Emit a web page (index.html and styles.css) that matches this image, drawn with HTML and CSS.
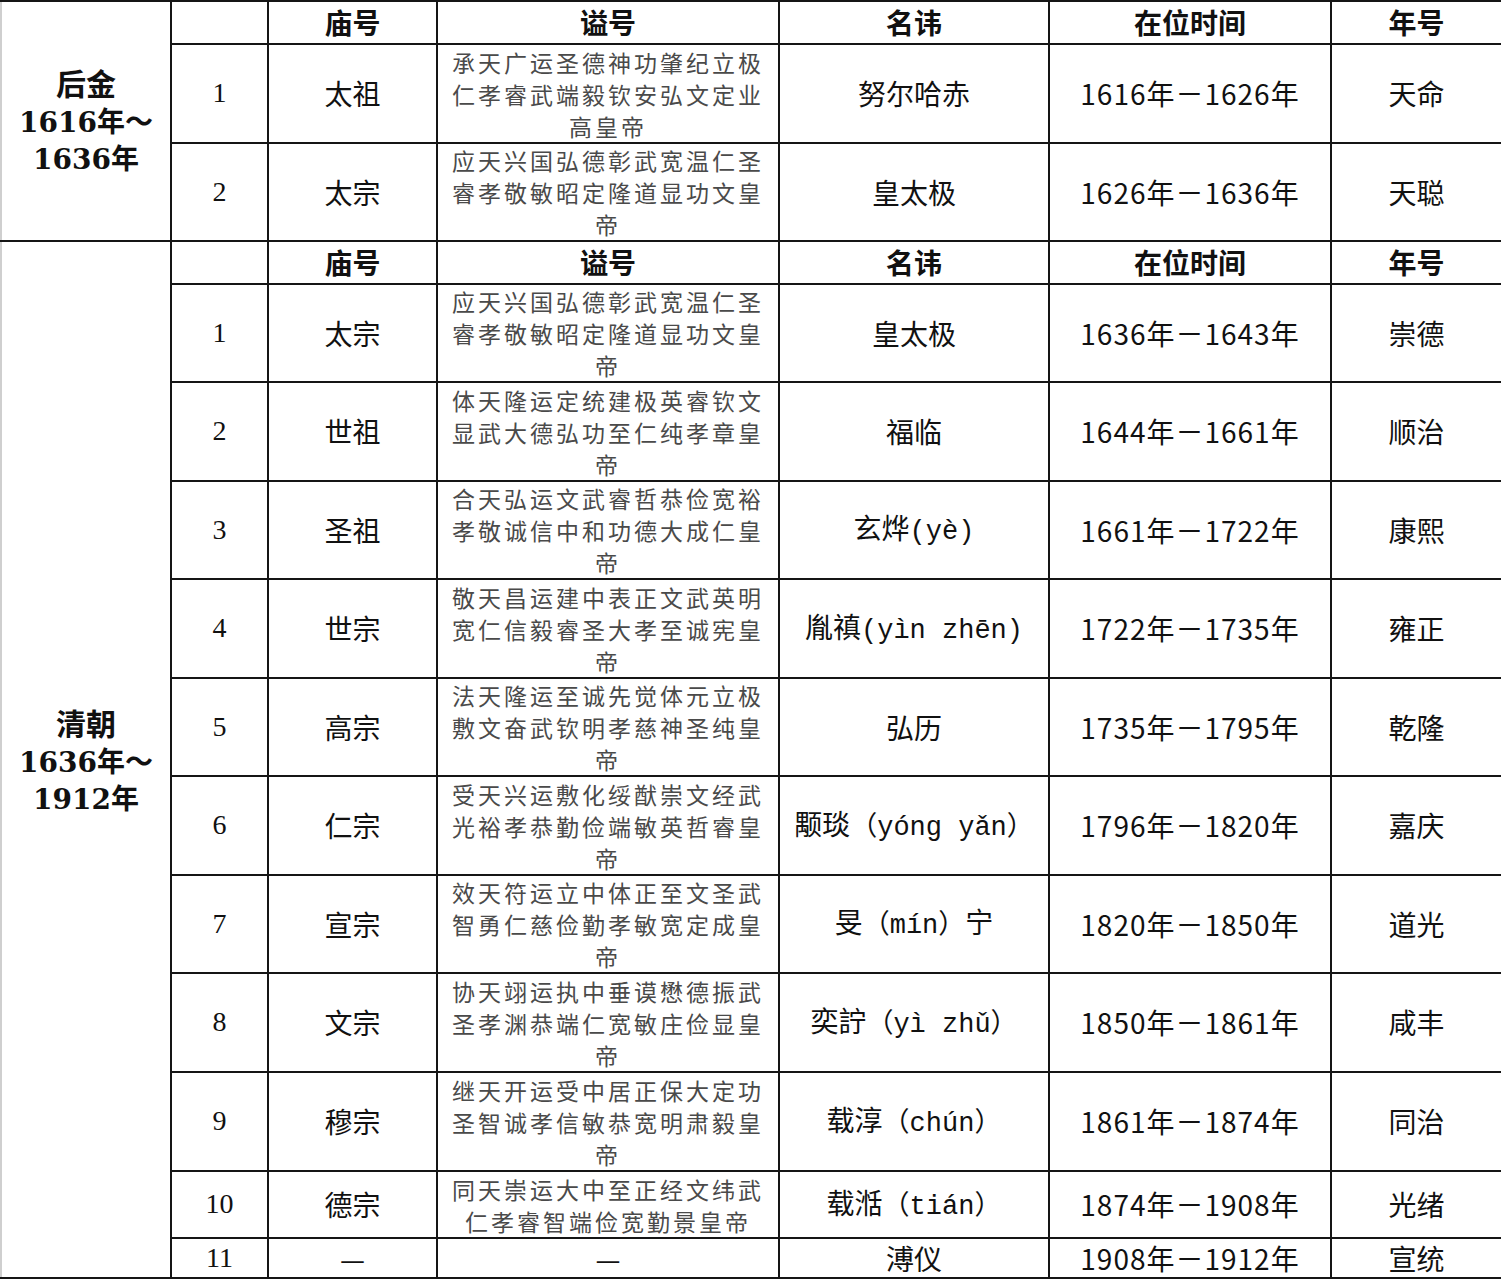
FILE: index.html
```html
<!DOCTYPE html>
<html lang="zh-CN">
<head>
<meta charset="utf-8">
<title>清朝皇帝列表</title>
<link rel="stylesheet" href="styles.css">
</head>
<body>
<table class="emperors">
  <colgroup>
    <col class="c-era"><col class="c-no"><col class="c-temple"><col class="c-post"><col class="c-name"><col class="c-reign"><col class="c-eraname">
  </colgroup>
  <tbody>
    <tr class="h-head">
      <td class="era" rowspan="3"><span class="era-name">后金</span><br>1616年～<br>1636年</td>
      <th class="no"></th><th>庙号</th><th>谥号</th><th>名讳</th><th>在位时间</th><th class="last">年号</th>
    </tr>
    <tr class="h-99">
      <td class="no">1</td><td>太祖</td><td class="post">承天广运圣德神功肇纪立极<br>仁孝睿武端毅钦安弘文定业<br>高皇帝</td><td>努尔哈赤</td><td class="reign">1616年－1626年</td><td class="last">天命</td>
    </tr>
    <tr class="h-98 sect-end">
      <td class="no">2</td><td>太宗</td><td class="post">应天兴国弘德彰武宽温仁圣<br>睿孝敬敏昭定隆道显功文皇<br>帝</td><td>皇太极</td><td class="reign">1626年－1636年</td><td class="last">天聪</td>
    </tr>

    <tr class="h-head">
      <td class="era era-qing" rowspan="12"><span class="era-name">清朝</span><br>1636年～<br>1912年</td>
      <th class="no"></th><th>庙号</th><th>谥号</th><th>名讳</th><th>在位时间</th><th class="last">年号</th>
    </tr>
    <tr class="h-98">
      <td class="no">1</td><td>太宗</td><td class="post">应天兴国弘德彰武宽温仁圣<br>睿孝敬敏昭定隆道显功文皇<br>帝</td><td>皇太极</td><td class="reign">1636年－1643年</td><td class="last">崇德</td>
    </tr>
    <tr class="h-99">
      <td class="no">2</td><td>世祖</td><td class="post">体天隆运定统建极英睿钦文<br>显武大德弘功至仁纯孝章皇<br>帝</td><td>福临</td><td class="reign">1644年－1661年</td><td class="last">顺治</td>
    </tr>
    <tr class="h-98">
      <td class="no">3</td><td>圣祖</td><td class="post">合天弘运文武睿哲恭俭宽裕<br>孝敬诚信中和功德大成仁皇<br>帝</td><td>玄烨<span class="py">(yè)</span></td><td class="reign">1661年－1722年</td><td class="last">康熙</td>
    </tr>
    <tr class="h-99">
      <td class="no">4</td><td>世宗</td><td class="post">敬天昌运建中表正文武英明<br>宽仁信毅睿圣大孝至诚宪皇<br>帝</td><td>胤禛<span class="py">(yìn zhēn)</span></td><td class="reign">1722年－1735年</td><td class="last">雍正</td>
    </tr>
    <tr class="h-98">
      <td class="no">5</td><td>高宗</td><td class="post">法天隆运至诚先觉体元立极<br>敷文奋武钦明孝慈神圣纯皇<br>帝</td><td>弘历</td><td class="reign">1735年－1795年</td><td class="last">乾隆</td>
    </tr>
    <tr class="h-99">
      <td class="no">6</td><td>仁宗</td><td class="post">受天兴运敷化绥猷崇文经武<br>光裕孝恭勤俭端敏英哲睿皇<br>帝</td><td>颙琰<span class="py">（yóng yǎn）</span></td><td class="reign">1796年－1820年</td><td class="last">嘉庆</td>
    </tr>
    <tr class="h-98">
      <td class="no">7</td><td>宣宗</td><td class="post">效天符运立中体正至文圣武<br>智勇仁慈俭勤孝敏宽定成皇<br>帝</td><td>旻<span class="py">（mín）</span>宁</td><td class="reign">1820年－1850年</td><td class="last">道光</td>
    </tr>
    <tr class="h-99">
      <td class="no">8</td><td>文宗</td><td class="post">协天翊运执中垂谟懋德振武<br>圣孝渊恭端仁宽敏庄俭显皇<br>帝</td><td>奕詝<span class="py">（yì zhǔ）</span></td><td class="reign">1850年－1861年</td><td class="last">咸丰</td>
    </tr>
    <tr class="h-99">
      <td class="no">9</td><td>穆宗</td><td class="post">继天开运受中居正保大定功<br>圣智诚孝信敏恭宽明肃毅皇<br>帝</td><td>载淳<span class="py">（chún）</span></td><td class="reign">1861年－1874年</td><td class="last">同治</td>
    </tr>
    <tr class="h-short">
      <td class="no">10</td><td>德宗</td><td class="post">同天崇运大中至正经文纬武<br>仁孝睿智端俭宽勤景皇帝</td><td>载湉<span class="py">（tián）</span></td><td class="reign">1874年－1908年</td><td class="last">光绪</td>
    </tr>
    <tr class="h-last sect-end">
      <td class="no">11</td><td>—</td><td class="post dash">—</td><td>溥仪</td><td class="reign">1908年－1912年</td><td class="last">宣统</td>
    </tr>
  </tbody>
</table>
</body>
</html>
```

FILE: styles.css
```css
html, body {
  margin: 0;
  padding: 0;
  background: #ffffff;
}

.emperors {
  width: 1501px;
  table-layout: fixed;
  border-collapse: collapse;
  font-family: "Noto Sans CJK SC", "Noto Sans", sans-serif;
  font-size: 28px;
  color: #111111;
  border-top: 1px solid #e2e2e2;
}

.c-era { width: 170px; }
.c-no { width: 97px; }
.c-temple { width: 169px; }
.c-post { width: 342px; }
.c-name { width: 270px; }
.c-reign { width: 282px; }
.c-eraname { width: 171px; }

.emperors td,
.emperors th {
  border: 2px solid #151515;
  padding: 0;
  text-align: center;
  vertical-align: middle;
  line-height: 1.1;
  overflow: hidden;
  white-space: nowrap;
}

.emperors th {
  font-weight: 700;
  font-size: 28px;
}

.h-head { height: 43px; }
.h-99 { height: 99px; }
.h-98 { height: 98px; }
.h-short { height: 67px; }
.h-last { height: 40px; }

.emperors .era {
  border-left: 2px solid #cfcfcf;
  font-family: "DejaVu Serif", "Noto Sans CJK SC", serif;
  font-weight: 700;
  font-size: 28px;
  line-height: 37px;
}

.era-name {
  font-family: "Noto Sans CJK SC", sans-serif;
  font-size: 30px;
}

.emperors .era-qing {
  padding-top: 2px;
}

.emperors .no {
  font-family: "Liberation Serif", "Noto Sans CJK SC", serif;
  font-size: 28px;
}

.emperors .post {
  font-size: 23px;
  letter-spacing: 3px;
  line-height: 32px;
  color: #4a4a4a;
  white-space: normal;
}

.emperors .post.dash {
  color: #111111;
  font-size: 28px;
  letter-spacing: 0;
}

.emperors .reign {
  font-size: 28px;
  letter-spacing: 1px;
}

.py {
  font-family: "Liberation Mono", "Noto Sans CJK SC", monospace;
  font-size: 27px;
}

.emperors .h-head .last {
  border-right: 2px solid #e0e0e0;
}
```
